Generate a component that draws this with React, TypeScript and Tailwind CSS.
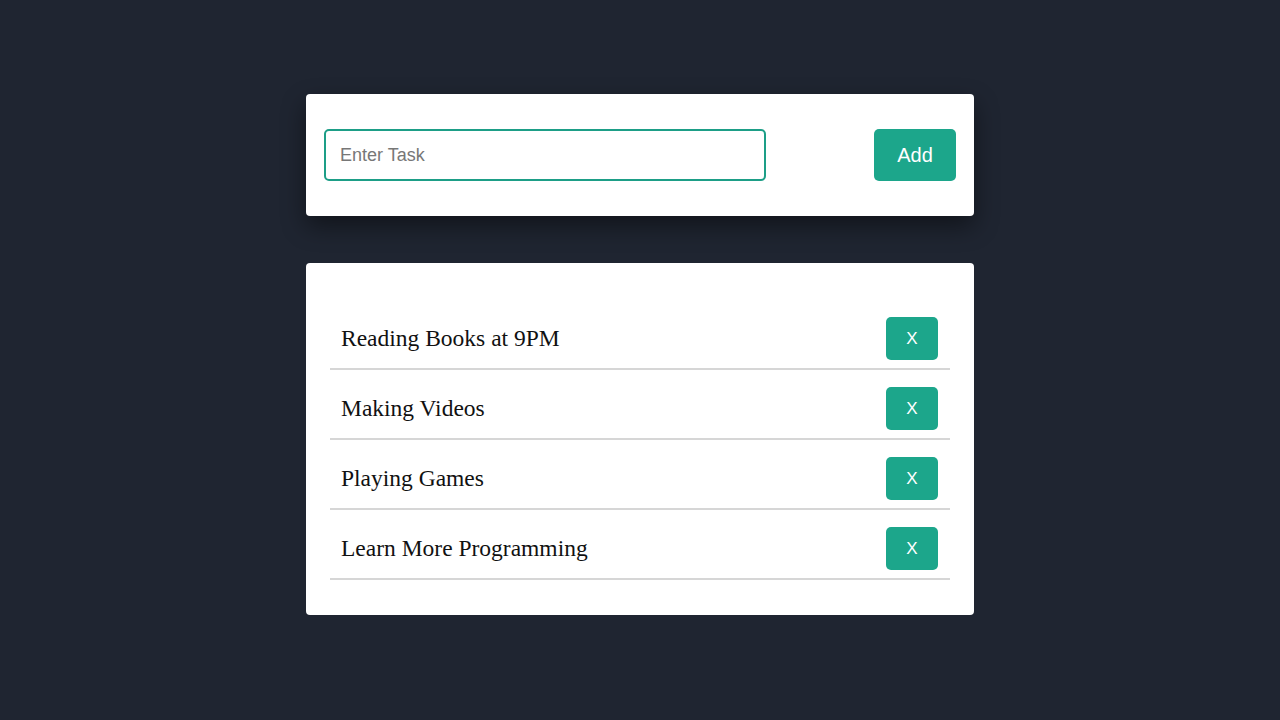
import { useState } from "react";

const initialTasks = ["Reading Books at 9PM", "Making Videos", "Playing Games", "Learn More Programming"];

function TaskRow({ name, onRemove }: { name: string; onRemove: () => void }) {
  return (
    <li className="mt-[9px] flex items-center justify-between border-b-2 border-[#d6d6d6] py-2 pl-[11px] pr-[12px]">
      <span className="font-['Liberation_Serif',serif] text-[23.5px] text-[#111]">{name}</span>
      <button
        onClick={onRemove}
        className="h-[43px] w-[52px] rounded-[5px] bg-[#1ca68b] font-['Liberation_Sans',Arial,sans-serif] text-[17px] text-white"
      >
        X
      </button>
    </li>
  );
}

export default function App() {
  const [tasks, setTasks] = useState(initialTasks);
  const [text, setText] = useState("");

  const add = () => {
    if (!text.trim()) return;
    setTasks([...tasks, text.trim()]);
    setText("");
  };

  return (
    <div className="flex min-h-[720px] w-full flex-col items-center bg-[#1f2531] pt-[94px] font-['Liberation_Sans',Arial,sans-serif]">
      <div className="flex w-[668px] items-center justify-between rounded-[4px] bg-white py-[35px] pl-[18px] pr-[18px] shadow-[0_10px_25px_rgba(0,0,0,0.45)]">
        <input
          value={text}
          onChange={(e) => setText(e.target.value)}
          placeholder="Enter Task"
          className="h-[52px] w-[442px] rounded-[5px] border-2 border-[#1d9e87] px-[14px] text-[18px] text-[#222] outline-none placeholder:text-[#777]"
        />
        <button onClick={add} className="h-[52px] w-[82px] rounded-[5px] bg-[#1ca68b] text-[20px] text-white">
          Add
        </button>
      </div>

      <div className="mt-[47px] w-[668px] rounded-[4px] bg-white px-6 pb-[35px] pt-[37px]">
        <ul>
          {tasks.map((t, i) => (
            <TaskRow key={i} name={t} onRemove={() => setTasks(tasks.filter((_, j) => j !== i))} />
          ))}
        </ul>
      </div>
    </div>
  );
}
